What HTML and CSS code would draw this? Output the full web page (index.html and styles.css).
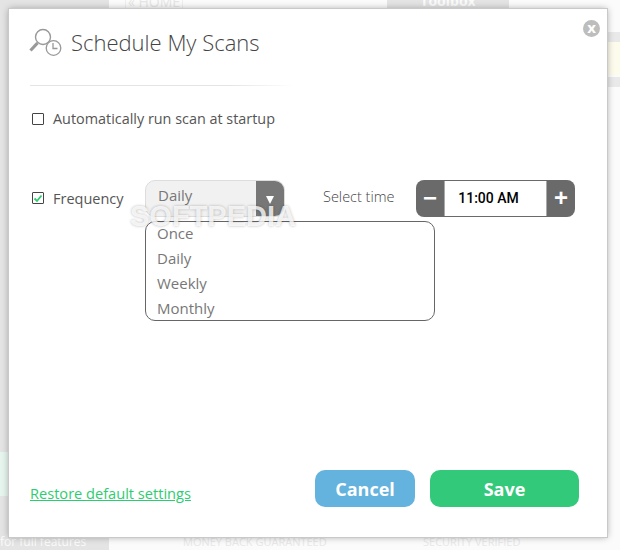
FILE: index.html
```html
<!DOCTYPE html>
<html lang="en">
<head>
    <meta charset="UTF-8">
    <meta name="viewport" content="width=device-width, initial-scale=1.0">
    <title>Schedule My Scans</title>
    <link rel="stylesheet" href="styles.css">
</head>
<body>

<div class="backdrop">
    <div class="backdrop-side"></div>
    <div class="backdrop-main"></div>
    <span class="bg-tab bg-tab-home">&laquo; HOME</span>
    <span class="bg-tab bg-tab-toolbox">Toolbox</span>
    <span class="bg-note bg-note-features">for full features</span>
    <span class="bg-note bg-note-money">MONEY BACK GUARANTEED</span>
    <span class="bg-note bg-note-security">SECURITY VERIFIED</span>
    <span class="bg-block bg-block-green"></span>
    <span class="bg-block bg-block-gray1"></span>
    <span class="bg-block bg-block-cream"></span>
    <span class="bg-block bg-block-gray2"></span>
</div>

<div class="dialog">
    <button class="close-btn">x</button>

    <div class="dialog-header">
        <svg class="header-icon" width="34" height="30" viewBox="0 0 34 30" fill="none">
            <circle cx="14" cy="10" r="7.5" stroke="#999" stroke-width="1.4"/>
            <path d="M8.5 16 L1.5 23.5" stroke="#999" stroke-width="3.2"/>
            <circle cx="24.5" cy="21" r="7.3" fill="#fff" stroke="#999" stroke-width="1.3"/>
            <path d="M24 16 V21.5 H28.5" stroke="#999" stroke-width="1.3"/>
        </svg>
        <h1>Schedule My Scans</h1>
    </div>
    <div class="divider"></div>

    <label class="check-row startup-row">
        <span class="check"></span>
        Automatically run scan at startup
    </label>

    <div class="schedule-row">
        <label class="check-row frequency-label">
            <span class="check">
                <svg width="10" height="9" viewBox="0 0 10 9" fill="none">
                    <path d="M1.5 4.5 L4 7 L8.5 1.5" stroke="#2ecc71" stroke-width="1.8"/>
                </svg>
            </span>
            Frequency
        </label>

        <div class="select-wrap">
            <div class="select-box">
                <span class="select-value">Daily</span>
                <span class="select-arrow"></span>
            </div>
            <ul class="select-list">
                <li>Once</li>
                <li>Daily</li>
                <li>Weekly</li>
                <li>Monthly</li>
            </ul>
            <span class="watermark">SOFTPEDIA</span>
        </div>

        <span class="time-label">Select time</span>
        <div class="time-picker">
            <span class="time-btn">&minus;</span>
            <span class="time-value">11:00 AM</span>
            <span class="time-btn">+</span>
        </div>
    </div>

    <div class="dialog-footer">
        <a href="#" class="restore-link">Restore default settings</a>
        <div class="footer-buttons">
            <button class="btn btn-cancel">Cancel</button>
            <button class="btn btn-save">Save</button>
        </div>
    </div>
</div>

</body>
</html>
```

FILE: styles.css
```css
html, body {
    height: 100%;
}

body {
    font-family: "Open Sans", sans-serif;
    background-color: #f2f2f2;
    margin: 0;
    padding: 9px 13px 13px 9px;
    box-sizing: border-box;
    overflow: hidden;
    color: #555;
}

/* faded page behind the dialog */
.backdrop {
    position: absolute;
    top: 0;
    left: 0;
    width: 620px;
    height: 550px;
    display: flex;
    overflow: hidden;
}

.backdrop-side {
    width: 109px;
    background-color: #e4e4e4;
}

.backdrop-main {
    flex: 1;
    background-color: #fbfbfb;
}

.bg-tab {
    position: absolute;
    top: -9px;
    height: 20px;
    line-height: 20px;
    font-size: 14px;
    color: #e6e6e6;
    text-align: center;
    box-sizing: border-box;
}

.bg-tab-home {
    left: 125px;
    width: 58px;
    border: 1px solid #eeeeee;
}

.bg-tab-toolbox {
    left: 387px;
    width: 122px;
    background-color: #e4e4e4;
    color: #fbfbfb;
    font-weight: bold;
    border-radius: 4px;
}

.bg-note {
    position: absolute;
    top: 534px;
    font-size: 11px;
    line-height: 16px;
    color: #e8e8e8;
    white-space: nowrap;
}

.bg-note-features {
    left: 0;
    font-size: 12px;
    color: #fbfbfb;
}

.bg-note-money {
    left: 183px;
}

.bg-note-security {
    left: 423px;
}

.bg-block {
    position: absolute;
}

.bg-block-green {
    left: 0;
    top: 452px;
    width: 9px;
    height: 44px;
    background-color: #e6f6ee;
}

.bg-block-gray1 {
    left: 608px;
    top: 32px;
    width: 12px;
    height: 10px;
    background-color: #e9e9e9;
}

.bg-block-cream {
    left: 608px;
    top: 42px;
    width: 12px;
    height: 33px;
    background-color: #fdfbec;
}

.bg-block-gray2 {
    left: 608px;
    top: 77px;
    width: 12px;
    height: 10px;
    background-color: #e9e9e9;
}

.dialog {
    position: relative;
    width: 598px;
    height: 528px;
    background-color: white;
    box-shadow: 0 0 0 1px #c9c9c9, 0 0 7px rgba(0, 0, 0, 0.35);
    display: flex;
    flex-direction: column;
    padding: 0 28px 0 21px;
    box-sizing: border-box;
}

.close-btn {
    position: absolute;
    top: 11px;
    right: 7px;
    width: 17px;
    height: 17px;
    border: none;
    border-radius: 50%;
    background-color: #bdbdbd;
    color: white;
    font-family: "Open Sans", sans-serif;
    font-weight: bold;
    font-size: 15px;
    line-height: 13px;
    padding: 0 0 2px;
}

.dialog-header {
    display: flex;
    align-items: center;
    height: 48px;
    margin-top: 9px;
}

.header-icon {
    margin-left: -1px;
    margin-right: 8px;
}

h1 {
    font-size: 22px;
    font-weight: 300;
    color: #444;
    margin: 0;
}

.divider {
    width: 265px;
    height: 1px;
    margin-top: 19px;
    background: linear-gradient(to right, #e4e4e4 75%, #ffffff);
}

.check-row {
    display: flex;
    align-items: center;
    font-size: 14.5px;
    color: #555;
}

.check {
    display: flex;
    align-items: center;
    justify-content: center;
    width: 10px;
    height: 10px;
    border: 1px solid #444;
    border-radius: 1px;
    margin-left: 2px;
    margin-right: 9px;
}

.startup-row {
    margin-top: 23px;
    font-size: 14.4px;
}

.schedule-row {
    display: flex;
    align-items: flex-start;
    margin-top: 52px;
}

.frequency-label {
    width: 115px;
    height: 36px;
}

.select-wrap {
    position: relative;
    width: 140px;
    height: 37px;
}

.select-box {
    display: flex;
    height: 37px;
    box-sizing: border-box;
    border: 1px solid #ddd;
    border-radius: 10px;
    background-color: #f1f1f1;
    overflow: hidden;
}

.select-value {
    flex: 1;
    padding-left: 12px;
    font-size: 15px;
    line-height: 29px;
    color: #777;
}

.select-arrow {
    display: flex;
    align-items: center;
    justify-content: center;
    width: 28px;
    background-color: #777;
}

.select-arrow::after {
    content: "";
    margin-top: 2px;
    border-left: 4px solid transparent;
    border-right: 4px solid transparent;
    border-top: 8px solid white;
}

.select-list {
    position: absolute;
    top: 41px;
    left: 0;
    width: 290px;
    height: 100px;
    box-sizing: border-box;
    margin: 0;
    padding: 0 11px;
    list-style: none;
    background-color: white;
    border: 1px solid #666;
    border-radius: 10px;
    font-size: 15px;
    color: #777;
}

.select-list li {
    height: 25px;
    line-height: 23px;
}

.watermark {
    position: absolute;
    top: 20px;
    left: -15px;
    font-family: "Liberation Sans", sans-serif;
    font-size: 29px;
    font-weight: bold;
    color: rgba(255, 255, 255, 0.8);
    text-shadow: 0 0 3px rgba(0, 0, 0, 0.28);
    white-space: nowrap;
}

.time-label {
    width: 93px;
    margin-left: 38px;
    font-size: 14.5px;
    line-height: 34px;
    font-weight: 300;
    color: #444;
}

.time-picker {
    display: flex;
    width: 159px;
    height: 37px;
    border-radius: 8px;
    overflow: hidden;
    background-color: #6a6a6a;
}

.time-btn {
    width: 28px;
    color: white;
    font-family: "Liberation Sans", sans-serif;
    font-size: 24px;
    font-weight: bold;
    line-height: 35px;
    text-align: center;
}

.time-value {
    flex: 1;
    margin: 1px 0;
    padding-right: 14px;
    border: 1px solid #aaa;
    border-width: 0 1px;
    background-color: white;
    color: black;
    font-family: Roboto, sans-serif;
    font-size: 14px;
    font-weight: 500;
    line-height: 35px;
    text-align: center;
}

.dialog-footer {
    display: flex;
    justify-content: space-between;
    align-items: center;
    margin-top: auto;
    margin-bottom: 30px;
}

.restore-link {
    margin-top: 8px;
    color: #2ecc71;
    font-size: 14.6px;
}

.footer-buttons {
    display: flex;
    gap: 15px;
}

.btn {
    height: 37px;
    border: none;
    border-radius: 10px;
    color: white;
    font-family: "Open Sans", sans-serif;
    font-size: 18px;
    font-weight: bold;
    padding: 0;
}

.btn-cancel {
    width: 100px;
    background-color: #64b2de;
}

.btn-save {
    width: 149px;
    background-color: #33c97a;
}
```
